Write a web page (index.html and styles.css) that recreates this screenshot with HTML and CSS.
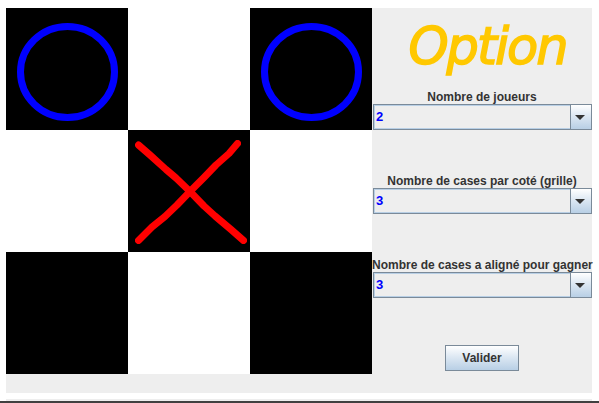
FILE: index.html
```html
<!DOCTYPE html>
<html lang="en">
<head>
    <meta charset="UTF-8">
    <title>Morpion</title>
    <link rel="stylesheet" href="styles.css">
</head>
<body>
    <div class="frame">
        <div class="board">
            <div class="cell black">
                <svg class="mark" viewBox="0 0 122 122"><ellipse class="ring" cx="61.5" cy="64" rx="47" ry="45.5"/></svg>
            </div>
            <div class="cell"></div>
            <div class="cell black">
                <svg class="mark" viewBox="0 0 122 122"><ellipse class="ring" cx="61.5" cy="64" rx="47" ry="45.5"/></svg>
            </div>
            <div class="cell"></div>
            <div class="cell black">
                <svg class="mark" viewBox="0 0 122 122">
                    <path class="cross" d="M10.5 15 L22 25 L38 39.5 L48 48 L62 61.5 L76 76 L87 86 L103 99.5 L115.5 110.5"/>
                    <path class="cross" d="M109.5 13.5 L101 23.5 L88 35 L76 47.5 L62 61.5 L49 75 L37 86.5 L24 97 L10.5 110.5"/>
                </svg>
            </div>
            <div class="cell"></div>
            <div class="cell black"></div>
            <div class="cell"></div>
            <div class="cell black"></div>
        </div>

        <div class="options">
            <h1 class="title">Option</h1>

            <div class="field field-players">
                <label>Nombre de joueurs</label>
                <div class="combo">
                    <span class="combo-value">2</span>
                    <span class="combo-arrow"></span>
                </div>
            </div>

            <div class="field field-size">
                <label>Nombre de cases par coté (grille)</label>
                <div class="combo">
                    <span class="combo-value">3</span>
                    <span class="combo-arrow"></span>
                </div>
            </div>

            <div class="field field-align">
                <label>Nombre de cases a aligné pour gagner</label>
                <div class="combo">
                    <span class="combo-value">3</span>
                    <span class="combo-arrow"></span>
                </div>
            </div>

            <button class="submit">Valider</button>
        </div>
    </div>

    <div class="strip-light"></div>
    <div class="strip-dark"></div>
</body>
</html>
```

FILE: styles.css
```css
html, body {
    height: 403px;
    overflow: hidden;
}
body {
    margin: 0;
    padding-top: 8px;
    box-sizing: border-box;
    background-color: #ffffff;
    font-family: "Liberation Sans", Arial, sans-serif;
    font-size: 12px;
    font-weight: bold;
    color: #333333;
}
.frame {
    display: flex;
    width: 586px;
    height: 385px;
    margin-left: 6px;
    background-color: #eeeeee;
}
.board {
    display: grid;
    grid-template-columns: repeat(3, 122px);
    grid-template-rows: repeat(3, 122px);
    flex: none;
    height: 366px;
}
.cell {
    background-color: #ffffff;
}
.black {
    background-color: #000000;
}
.mark {
    display: block;
    width: 122px;
    height: 122px;
}
.ring {
    fill: none;
    stroke: #0000ff;
    stroke-width: 7;
}
.cross {
    fill: none;
    stroke: #ff0000;
    stroke-width: 7;
    stroke-linecap: round;
    stroke-linejoin: round;
    filter: blur(0.5px);
}
.options {
    display: flex;
    flex-direction: column;
    flex: 1;
    min-width: 0;
}
.title {
    height: 62px;
    margin: 8px 0 0;
    padding-left: 11px;
    font-family: "DejaVu Sans", sans-serif;
    font-size: 51px;
    font-style: italic;
    font-weight: normal;
    letter-spacing: -2px;
    line-height: 62px;
    text-align: center;
    color: #ffc800;
    -webkit-text-stroke: 1.5px #ffc800;
}
.field-players {
    margin-top: 11px;
}
.field-size {
    margin-top: 43px;
}
.field-align {
    margin-top: 43px;
}
label {
    display: block;
    height: 15px;
    line-height: 17px;
    text-align: center;
    white-space: nowrap;
}
.combo {
    display: flex;
    height: 26px;
    margin-left: 1px;
    box-sizing: border-box;
    border: 1px solid #7a8a99;
    box-shadow: inset 0 0 0 1px #b8cfe5;
}
.combo-value {
    flex: 1;
    padding-left: 2px;
    font-size: 13px;
    line-height: 24px;
    color: #0000ff;
}
.combo-arrow {
    position: relative;
    flex: none;
    width: 20px;
    border-left: 1px solid #7a8a99;
    background: linear-gradient(#ffffff, #dde8f3 45%, #b8cfe5);
}
.combo-arrow::after {
    content: "";
    position: absolute;
    left: 4px;
    top: 10px;
    border-style: solid;
    border-width: 5px 5px 0;
    border-color: #333333 transparent transparent;
}
.submit {
    display: block;
    width: 74px;
    height: 26px;
    margin: 47px 0 0 73px;
    padding: 0;
    border: 1px solid #7a8a99;
    border-radius: 0;
    background: linear-gradient(#ffffff, #dde8f3 45%, #b8cfe5);
    font: inherit;
    color: #333333;
}
.strip-light {
    width: 586px;
    height: 2px;
    margin: 6px 0 0 6px;
    background-color: #eeeeee;
}
.strip-dark {
    height: 2px;
    background-color: #404040;
}
```
